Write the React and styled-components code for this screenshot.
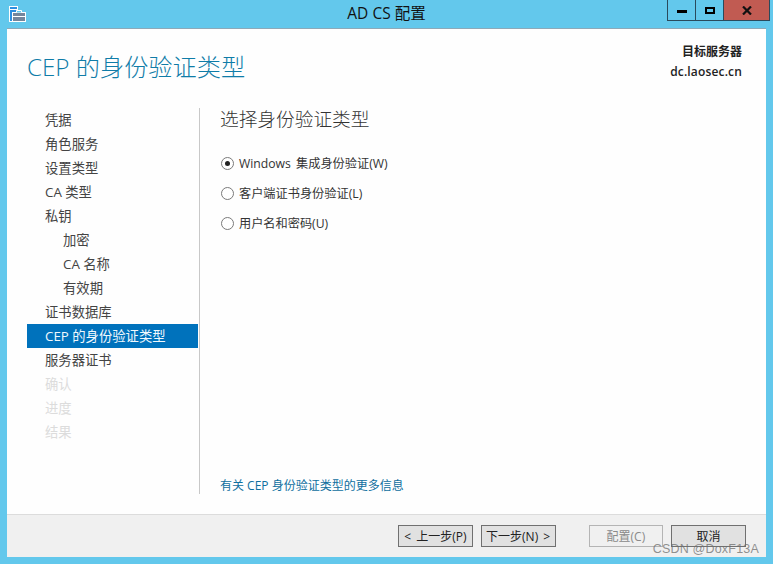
import React, { useState } from "react";
import styled, { createGlobalStyle } from "styled-components";

const FONT = `"Open Sans", "Noto Sans CJK SC", sans-serif`;

const steps = [
  { label: "凭据" },
  { label: "角色服务" },
  { label: "设置类型" },
  { label: "CA 类型" },
  { label: "私钥" },
  { label: "加密", sub: true },
  { label: "CA 名称", sub: true },
  { label: "有效期", sub: true },
  { label: "证书数据库" },
  { label: "CEP 的身份验证类型", active: true },
  { label: "服务器证书" },
  { label: "确认", disabled: true },
  { label: "进度", disabled: true },
  { label: "结果", disabled: true },
];

const authTypes = [
  { id: "win", label: "Windows 集成身份验证(W)" },
  { id: "cert", label: "客户端证书身份验证(L)" },
  { id: "user", label: "用户名和密码(U)" },
];

function AppIcon() {
  return (
    <svg width="17" height="16" viewBox="0 0 17 16">
      <rect x="0.5" y="0.5" width="8" height="15" fill="#2b8fe0" stroke="#fff" />
      <rect x="1" y="3" width="7" height="1" fill="#fff" />
      <rect x="3.5" y="6.5" width="13" height="9" fill="#74869c" stroke="#fff" />
      <path d="M7.5 6.5V4.5H12.5V6.5" fill="#63c8ec" stroke="#fff" />
      <path d="M4 10.5H16" stroke="#fff" />
    </svg>
  );
}

export default function App() {
  const [auth, setAuth] = useState("win");

  return (
    <>
      <GlobalStyle />
      <Window>
        <TitleBar>
          <IconSlot>
            <AppIcon />
          </IconSlot>
          <WindowTitle>AD CS 配置</WindowTitle>
          <WindowControls>
            <ControlButton>
              <MinimizeGlyph />
            </ControlButton>
            <ControlButton>
              <MaximizeGlyph />
            </ControlButton>
            <CloseButton>
              <svg width="10" height="9" viewBox="0 0 10 9">
                <path d="M1 0.5L9 8.5M9 0.5L1 8.5" stroke="#111" strokeWidth="2.2" />
              </svg>
            </CloseButton>
          </WindowControls>
        </TitleBar>
        <Client>
          <Header>
            <PageTitle>CEP 的身份验证类型</PageTitle>
            <ServerInfo>
              <div>目标服务器</div>
              <ServerName>dc.laosec.cn</ServerName>
            </ServerInfo>
          </Header>
          <Body>
            <Nav>
              {steps.map((step) => (
                <NavItem
                  key={step.label}
                  $sub={step.sub}
                  $active={step.active}
                  $disabled={step.disabled}
                >
                  {step.label}
                </NavItem>
              ))}
            </Nav>
            <Content>
              <SectionTitle>选择身份验证类型</SectionTitle>
              <RadioList>
                {authTypes.map((type) => (
                  <RadioRow key={type.id} onClick={() => setAuth(type.id)}>
                    <RadioCircle $checked={auth === type.id} />
                    {type.label}
                  </RadioRow>
                ))}
              </RadioList>
              <MoreLink>有关 CEP 身份验证类型的更多信息</MoreLink>
            </Content>
          </Body>
          <Footer>
            <Button>&lt; 上一步(P)</Button>
            <NextButton>下一步(N) &gt;</NextButton>
            <ConfigButton disabled>配置(C)</ConfigButton>
            <Button>取消</Button>
          </Footer>
        </Client>
        <Watermark>CSDN @DoxF13A</Watermark>
      </Window>
    </>
  );
}

const GlobalStyle = createGlobalStyle`
  html, body {
    margin: 0;
    padding: 0;
    background: #63c8ec;
  }
  body {
    font-family: ${FONT};
  }
`;

const Window = styled.div`
  position: relative;
  display: flex;
  flex-direction: column;
  width: 773px;
  height: 564px;
  background: #63c8ec;
  overflow: hidden;
`;

const TitleBar = styled.div`
  position: relative;
  display: flex;
  justify-content: center;
  height: 28px;
  flex: none;
`;

const IconSlot = styled.div`
  position: absolute;
  left: 9px;
  top: 5px;
  width: 17px;
  height: 16px;
`;

const WindowTitle = styled.div`
  font-size: 15.5px;
  color: #111;
  line-height: 27px;
`;

const WindowControls = styled.div`
  position: absolute;
  top: 0;
  left: 667px;
  display: flex;
  height: 20px;
  border: 1px solid #2a4a5c;
  border-top: none;
`;

const ControlButton = styled.div`
  display: flex;
  align-items: center;
  justify-content: center;
  width: 27px;
  border-right: 1px solid #2a4a5c;
`;

const CloseButton = styled.div`
  display: flex;
  align-items: center;
  justify-content: center;
  width: 45px;
  background: #c15b52;
`;

const MinimizeGlyph = styled.div`
  width: 10px;
  height: 3px;
  margin-top: 3px;
  background: #000;
`;

const MaximizeGlyph = styled.div`
  width: 6px;
  height: 3px;
  border: 2px solid #000;
`;

const Client = styled.div`
  display: flex;
  flex-direction: column;
  flex: 1;
  margin: 0 7px 7px;
  background: #fefefe;
  border-top: 1px solid #8ea9b8;
  min-height: 0;
`;

const Header = styled.div`
  display: flex;
  justify-content: space-between;
  height: 79px;
  flex: none;
  padding: 0 24px 0 20px;
`;

const PageTitle = styled.div`
  margin-top: 20px;
  font-size: 24.2px;
  font-weight: 300;
  line-height: 36px;
  color: #0f7ca8;
`;

const ServerInfo = styled.div`
  margin-top: 13px;
  font-size: 12px;
  font-weight: 600;
  line-height: 20px;
  text-align: right;
  color: #222;
`;

const ServerName = styled.div`
  letter-spacing: 0.16px;
`;

const Body = styled.div`
  display: flex;
  flex: 1;
  min-height: 0;
  padding: 0 0 20px 20px;
`;

const Nav = styled.div`
  width: 171px;
  flex: none;
`;

const NavItem = styled.div`
  height: 24px;
  line-height: 24px;
  font-size: 13.33px;
  white-space: nowrap;
  padding-left: ${(p) => (p.$sub ? 36 : 18)}px;
  color: ${(p) => (p.$active ? "#f0f8fd" : p.$disabled ? "#dcdcdc" : "#444")};
  background: ${(p) => (p.$active ? "#0072bc" : "transparent")};
`;

const Content = styled.div`
  display: flex;
  flex-direction: column;
  flex: 1;
  margin-left: 1px;
  padding-left: 20px;
  border-left: 1px solid #c8c8c8;
`;

const SectionTitle = styled.div`
  font-size: 18.7px;
  font-weight: 300;
  line-height: 22px;
  color: #333;
`;

const RadioList = styled.div`
  display: flex;
  flex-direction: column;
  gap: 10px;
  margin-top: 23px;
  padding-left: 1px;
  flex: 1;
`;

const RadioRow = styled.label`
  display: flex;
  align-items: center;
  gap: 5px;
  height: 20px;
  font-size: 12.2px;
  word-spacing: 2px;
  white-space: pre;
  color: #333;
`;

const RadioCircle = styled.span`
  position: relative;
  width: 11px;
  height: 11px;
  border: 1px solid #7a7a7a;
  border-radius: 50%;
  background: #fff;
  flex: none;
  &::after {
    content: "";
    display: ${(p) => (p.$checked ? "block" : "none")};
    position: absolute;
    left: 3px;
    top: 3px;
    width: 5px;
    height: 5px;
    border-radius: 50%;
    background: #222;
  }
`;

const MoreLink = styled.div`
  font-size: 12px;
  line-height: 16px;
  color: #0f6f9f;
`;

const Footer = styled.div`
  display: flex;
  align-items: center;
  height: 42px;
  flex: none;
  padding: 0 20px 0 391px;
  background: #f0f0f0;
  border-top: 1px solid #dcdcdc;
`;

const Button = styled.button`
  width: 75px;
  height: 22px;
  padding: 1px 0 0;
  margin: 0;
  font-family: ${FONT};
  font-size: 12px;
  line-height: 18px;
  word-spacing: 2px;
  color: #222;
  background: #e1e1e1;
  border: 1px solid #707070;
`;

const NextButton = styled(Button)`
  margin: 0 33px 0 8px;
`;

const ConfigButton = styled(Button)`
  margin-right: 8px;
  color: #8a8a8a;
  background: #f0f0f0;
  border-color: #b4b4b4;
`;

const Watermark = styled.div`
  position: absolute;
  right: 14px;
  top: 542px;
  font-family: "Liberation Sans", sans-serif;
  font-size: 12.5px;
  letter-spacing: 0.2px;
  color: rgba(110, 110, 110, 0.75);
`;
